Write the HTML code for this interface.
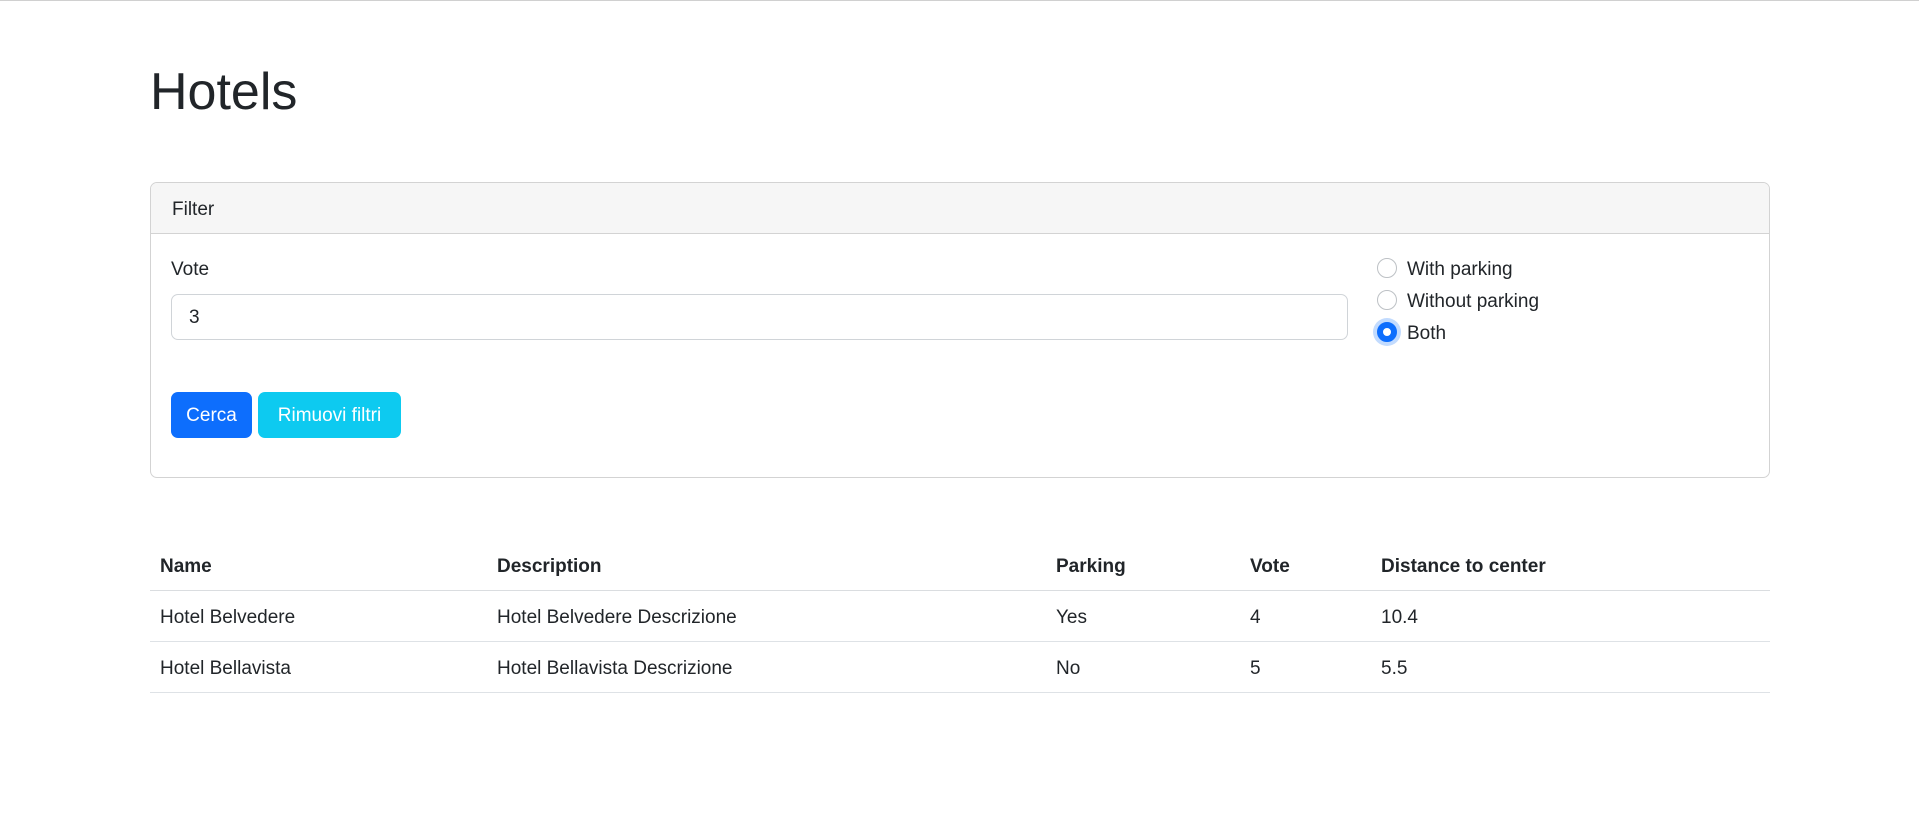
<!DOCTYPE html>
<html><head><meta charset="utf-8"><style>
*{box-sizing:border-box;margin:0;padding:0}
html,body{width:1919px;height:825px;background:#fff;overflow:hidden}
body{font-family:"Liberation Sans",sans-serif;color:#212529;font-size:19px;position:relative;border-top:1px solid #d0d0d0}
.a{position:absolute;white-space:nowrap}
h1{position:absolute;left:150px;top:60px;font-size:52px;font-weight:500;line-height:1.2;color:#212529}
.card{position:absolute;left:150px;top:181px;width:1620px;height:296px;border:1px solid #d3d3d3;border-radius:7px;overflow:hidden}
.ch{height:51px;background:#f6f6f6;border-bottom:1px solid #d3d3d3;padding:16px 0 0 21px}
.inp{position:absolute;left:171px;top:293px;width:1177px;height:46px;border:1px solid #d0d4d8;border-radius:7px;padding:12px 0 0 17px}
.btn{position:absolute;top:391px;height:46px;border-radius:7px;color:#fff;padding-top:13px;text-align:center}
.r{position:absolute;left:1377px;width:20px;height:20px;border-radius:50%;border:1px solid #bdc1c5;background:#fff}
.lbl{position:absolute;left:1407px}
.line{position:absolute;left:150px;width:1620px;height:1px;background:#dee2e6}
</style></head><body>
<h1>Hotels</h1>
<div class="card"><div class="ch">Filter</div></div>
<div class="a" style="left:171px;top:258px">Vote</div>
<div class="inp">3</div>
<div class="btn" style="left:171px;width:81px;background:#0d6efd">Cerca</div>
<div class="btn" style="left:258px;width:143px;background:#0dcaf0">Rimuovi filtri</div>
<div class="r" style="top:257px"></div>
<div class="lbl" style="top:258px">With parking</div>
<div class="r" style="top:289px"></div>
<div class="lbl" style="top:290px">Without parking</div>
<div class="r" style="top:321px;border:6px solid #0d6efd;box-shadow:0 0 0 4px #c2dbfe"></div>
<div class="lbl" style="top:322px">Both</div>

<div class="a" style="left:160px;top:555px;font-weight:bold">Name</div>
<div class="a" style="left:497px;top:555px;font-weight:bold">Description</div>
<div class="a" style="left:1056px;top:555px;font-weight:bold">Parking</div>
<div class="a" style="left:1250px;top:555px;font-weight:bold">Vote</div>
<div class="a" style="left:1381px;top:555px;font-weight:bold">Distance to center</div>
<div class="line" style="top:589px;background:#dadde0"></div>
<div class="a" style="left:160px;top:606px">Hotel Belvedere</div>
<div class="a" style="left:497px;top:606px">Hotel Belvedere Descrizione</div>
<div class="a" style="left:1056px;top:606px">Yes</div>
<div class="a" style="left:1250px;top:606px">4</div>
<div class="a" style="left:1381px;top:606px">10.4</div>
<div class="line" style="top:640px"></div>
<div class="a" style="left:160px;top:657px">Hotel Bellavista</div>
<div class="a" style="left:497px;top:657px">Hotel Bellavista Descrizione</div>
<div class="a" style="left:1056px;top:657px">No</div>
<div class="a" style="left:1250px;top:657px">5</div>
<div class="a" style="left:1381px;top:657px">5.5</div>
<div class="line" style="top:691px"></div>
</body></html>
